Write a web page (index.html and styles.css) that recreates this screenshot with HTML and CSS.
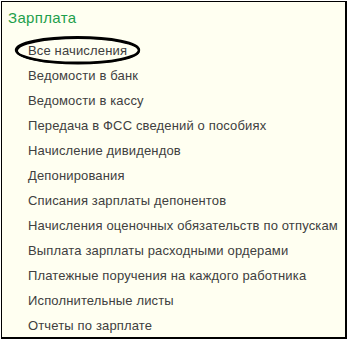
FILE: index.html
```html
<!DOCTYPE html>
<html lang="ru">
<head>
<meta charset="utf-8">
<title>Зарплата</title>
<link rel="stylesheet" href="styles.css">
</head>
<body>
<div class="panel">
  <div class="title">Зарплата</div>
  <ul class="items">
    <li>Все начисления</li>
    <li>Ведомости в банк</li>
    <li>Ведомости в кассу</li>
    <li>Передача в ФСС сведений о пособиях</li>
    <li>Начисление дивидендов</li>
    <li>Депонирования</li>
    <li>Списания зарплаты депонентов</li>
    <li>Начисления оценочных обязательств по отпускам</li>
    <li>Выплата зарплаты расходными ордерами</li>
    <li>Платежные поручения на каждого работника</li>
    <li>Исполнительные листы</li>
    <li>Отчеты по зарплате</li>
  </ul>
  <svg class="mark" width="128" height="32" viewBox="0 0 128 32">
    <ellipse cx="63.5" cy="15" rx="61.5" ry="12.8" fill="none" stroke="#000" stroke-width="2.4"/>
    <ellipse cx="64" cy="15.8" rx="61" ry="12.8" fill="none" stroke="#000" stroke-width="2"/>
  </svg>
</div>
</body>
</html>
```
FILE: styles.css
```css
html, body {
  margin: 0;
  padding: 0;
  background: #ffffff;
}
body {
  width: 348px;
  height: 340px;
  overflow: hidden;
}
.panel {
  position: relative;
  box-sizing: border-box;
  margin: 1px 0 0 1px;
  width: 346px;
  height: 338px;
  border-top: 1px solid #000;
  border-left: 1px solid #000;
  border-right: 2px solid #000;
  border-bottom: 2px solid #000;
  background: #fffff1;
  padding: 6px 0 0 6px;
  font-family: "Liberation Sans", Arial, sans-serif;
}
.title {
  font-size: 15px;
  line-height: 20px;
  letter-spacing: 0.35px;
  color: #1f9f4c;
}
.items {
  list-style: none;
  margin: 10px 0 0 0;
  padding: 0 0 0 20px;
}
.items li {
  font-size: 13px;
  line-height: 25px;
  letter-spacing: 0.15px;
  color: #404040;
  white-space: nowrap;
}
.mark {
  position: absolute;
  left: 12px;
  top: 33px;
}
```
